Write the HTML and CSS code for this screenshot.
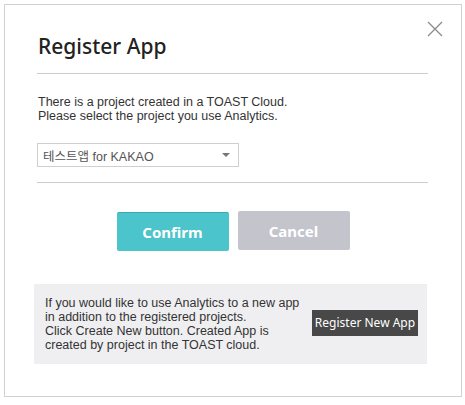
FILE: index.html
```html
<!DOCTYPE html>
<html>
<head>
<meta charset="utf-8">
<link rel="stylesheet" href="styles.css">
</head>
<body>
<div class="modal">
  <button class="close" aria-label="close">
    <svg width="16" height="16" viewBox="0 0 16 16"><path d="M1 1L15 15M15 1L1 15" stroke="#8a8a8a" stroke-width="1.3" fill="none"/></svg>
  </button>
  <div class="content">
    <h1 class="title">Register App</h1>
    <div class="section">
      <p class="desc">There is a project created in a TOAST Cloud.<br>Please select the project you use Analytics.</p>
      <div class="select">
        <span class="sel-text">테스트앱 for KAKAO</span>
        <span class="arrow"></span>
      </div>
    </div>
    <div class="actions">
      <button class="btn confirm">Confirm</button>
      <button class="btn cancel">Cancel</button>
    </div>
    <div class="info">
      <p class="info-text">If you would like to use Analytics to a new app<br>in addition  to the registered projects.<br>Click Create New button.  Created App is<br>created  by project in the TOAST cloud.</p>
      <button class="new-app">Register New App</button>
    </div>
  </div>
</div>
</body>
</html>
```
FILE: styles.css
```css
* { box-sizing: border-box; }
html, body { margin: 0; padding: 0; background: #fff; }
body { font-family: "Liberation Sans", "Noto Sans CJK KR", sans-serif; color: #333; }
.modal {
  position: relative;
  margin: 4px 0 0 4px;
  width: 458px;
  height: 393px;
  border: 1px solid #cfd3d3;
  background: #fff;
}
.close {
  position: absolute;
  top: 16px;
  right: 18px;
  width: 16px;
  height: 16px;
  padding: 0;
  border: 0;
  background: none;
}
.close svg { display: block; }
.content { padding: 27px 33px 0 32px; }
.title {
  margin: 0;
  font-family: "Noto Sans", sans-serif;
  font-size: 21px;
  font-weight: 500;
  color: #222;
  height: 42px;
  line-height: 28px;
  border-bottom: 1px solid #c9cfcf;
  padding-left: 1px;
}
.section {
  padding: 21px 0 15px 0;
  border-bottom: 1px solid #c9cfcf;
}
.desc {
  margin: 0 0 20px 1px;
  font-size: 12.5px;
  line-height: 14px;
  color: #333;
}
.select {
  width: 202px;
  height: 24px;
  border: 1px solid #cfcfcf;
  display: flex;
  align-items: center;
  justify-content: space-between;
  padding: 0 8px 0 5px;
}
.sel-text { font-size: 12.5px; color: #555; }
.arrow {
  width: 0; height: 0;
  border-left: 4px solid transparent;
  border-right: 4px solid transparent;
  border-top: 4px solid #777;
}
.actions {
  display: flex;
  justify-content: center;
  gap: 9px;
  padding: 29px 0 0 1px;
  height: 101px;
}
.btn {
  width: 112px;
  height: 39px;
  border: 0;
  border-radius: 2px;
  color: #fff;
  font-family: "Noto Sans", sans-serif;
  font-size: 15px;
  font-weight: 700;
  padding: 0;
}
.confirm { background: #4bc4cb; border-top: 1px solid #3aa9b3; }
.cancel { background: #c4c4cc; margin-top: -1px; }
.info {
  margin-left: -3px;
  width: 393px;
  height: 80px;
  background: #efeff1;
  display: flex;
  align-items: center;
  justify-content: space-between;
  padding: 0 9px 0 11px;
}
.info-text {
  margin: 0;
  font-size: 12.5px;
  line-height: 14px;
  color: #333;
}
.new-app {
  background: #484848;
  color: #fff;
  border: 0;
  height: 26px;
  width: 106px;
  padding: 0;
  font-family: "Noto Sans", sans-serif;
  font-size: 12px;
  margin-top: -3px;
}
```
